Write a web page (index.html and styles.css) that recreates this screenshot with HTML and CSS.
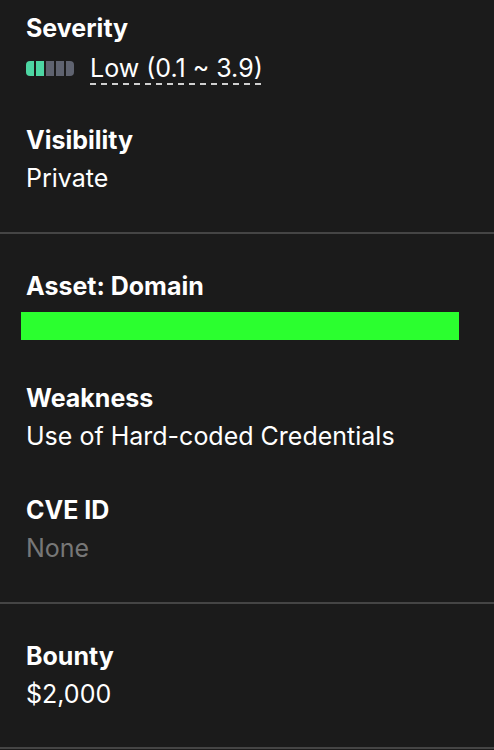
FILE: index.html
```html
<!DOCTYPE html>
<html>
<head>
<meta charset="utf-8">
<link rel="stylesheet" href="styles.css">
</head>
<body>
<div class="panel">
  <section class="section first">
    <div class="field">
      <div class="label">Severity</div>
      <div class="value sev">
        <span class="meter">
          <span class="seg on"></span><span class="seg on"></span><span class="seg"></span><span class="seg"></span><span class="seg"></span>
        </span>
        <span class="dashed">Low (0.1 ~ 3.9)</span>
      </div>
    </div>
    <div class="field">
      <div class="label">Visibility</div>
      <div class="value">Private</div>
    </div>
  </section>
  <section class="section">
    <div class="field">
      <div class="label">Asset: Domain</div>
      <div class="value redact-row"><div class="redact"></div></div>
    </div>
    <div class="field">
      <div class="label">Weakness</div>
      <div class="value">Use of Hard-coded Credentials</div>
    </div>
    <div class="field">
      <div class="label">CVE ID</div>
      <div class="value muted">None</div>
    </div>
  </section>
  <section class="section last">
    <div class="field">
      <div class="label">Bounty</div>
      <div class="value">$2,000</div>
    </div>
  </section>
</div>
</body>
</html>
```
FILE: styles.css
```css
html, body {
  margin: 0;
  padding: 0;
  background: #1b1b1b;
}
body {
  font-family: Inter, "Noto Sans", sans-serif;
  color: #ffffff;
  font-size: 25px;
}
.panel {
  display: flex;
  flex-direction: column;
}
.section {
  display: flex;
  flex-direction: column;
  gap: 36px;
  padding: 33px 26px 35px 26px;
  border-bottom: 2px solid #454545;
}
.section.first {
  padding-top: 9px;
}
.section.last {
  padding-bottom: 34px;
}
.field {
  display: flex;
  flex-direction: column;
}
.label {
  font-weight: 700;
  line-height: 38px;
  height: 38px;
}
.value {
  line-height: 38px;
  height: 38px;
  white-space: nowrap;
}
.value.sev,
.value.redact-row {
  display: flex;
  align-items: center;
  margin-top: 2px;
  margin-bottom: -2px;
}
.value.sev {
  gap: 16px;
}
.meter {
  display: flex;
  gap: 2px;
  border-radius: 4px;
  overflow: hidden;
  height: 15px;
}
.seg {
  width: 8px;
  height: 15px;
  background: #5f6370;
}
.seg.on {
  background: #4dd6a3;
}
.dashed {
  display: inline-block;
  line-height: 30px;
  padding-bottom: 2px;
  margin-top: 2px;
  background-image: repeating-linear-gradient(to right, #d0d0d0 0 6px, transparent 6px 11px);
  background-size: 100% 2px;
  background-repeat: no-repeat;
  background-position: left bottom;
}
.muted {
  color: #777777;
}
.redact-row {
  margin-left: -5px;
}
.redact {
  width: 438px;
  height: 28px;
  background: #2bff2f;
}
```
